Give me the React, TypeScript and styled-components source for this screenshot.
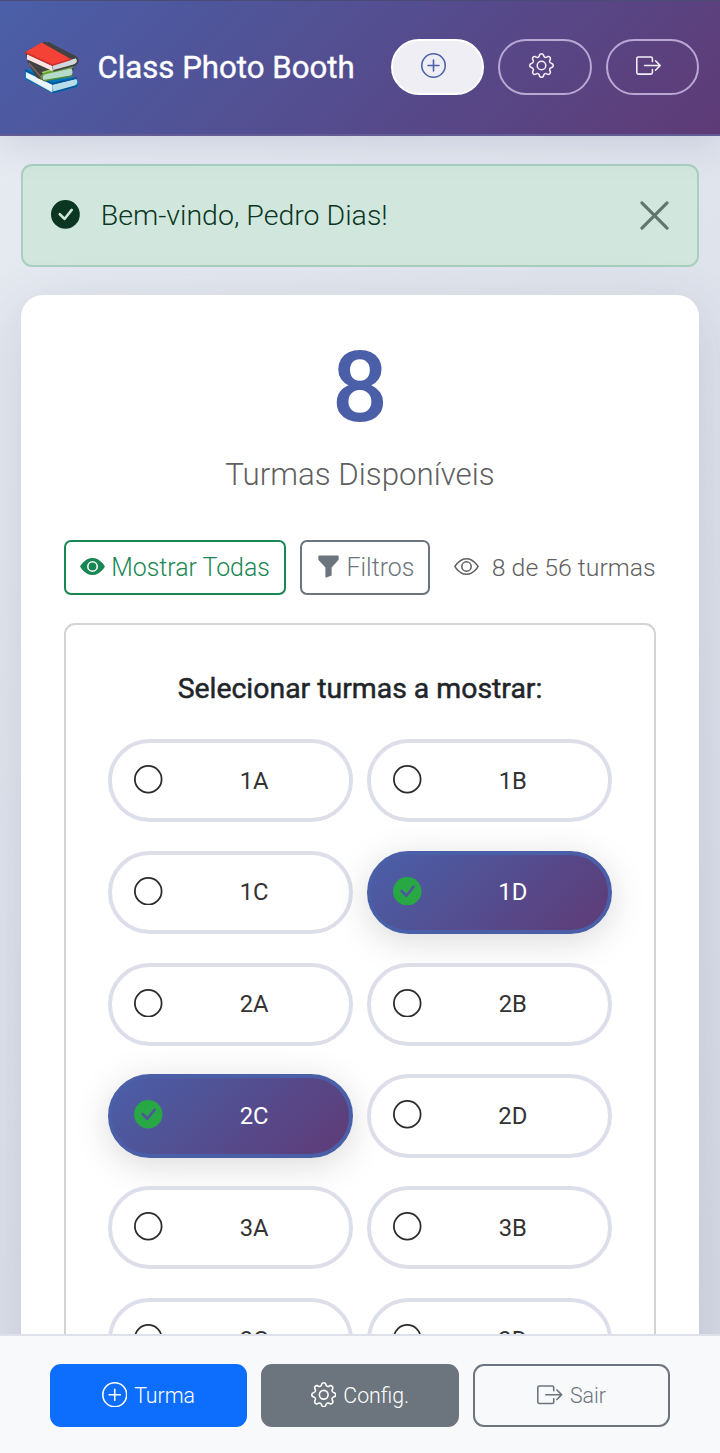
import React, { useState } from "react";
import styled, { createGlobalStyle, css } from "styled-components";
import {
  BsBoxArrowRight,
  BsCheckCircleFill,
  BsCircle,
  BsEye,
  BsEyeFill,
  BsFunnelFill,
  BsGear,
  BsPlusCircle,
} from "react-icons/bs";

const brandGradient = "linear-gradient(135deg, #4a5fa8 0%, #5e3b76 100%)";

const GlobalStyle = createGlobalStyle`
  *, *::before, *::after { box-sizing: border-box; }
  body {
    margin: 0;
    font-family: Roboto, "Liberation Sans", sans-serif;
    font-weight: 300;
    color: #212529;
  }
  button { font: inherit; cursor: pointer; margin: 0; }
  svg { display: block; flex: none; }
`;

const Screen = styled.div`
  display: flex;
  flex-direction: column;
  height: 1453px;
  overflow: hidden;
  background: linear-gradient(135deg, #e8ebf2 0%, #d4d9e4 100%);
`;

const Header = styled.header`
  position: relative;
  z-index: 1;
  flex: none;
  display: flex;
  align-items: center;
  height: 136px;
  padding: 0 21px 2px 23px;
  background: ${brandGradient};
  border-top: 1px solid #4b4b78;
  border-bottom: 2px solid #625b94;
  box-shadow: 0 7px 36px rgba(50, 70, 120, 0.15);

  > svg {
    margin-top: 2px;
  }
`;

const Title = styled.h1`
  margin: 0 auto 0 17.4px;
  padding-top: 2px;
  font-size: 31.2px;
  line-height: 40px;
  font-weight: 400;
  -webkit-text-stroke: 0.4px currentColor;
  color: #fff;
  white-space: nowrap;
`;

const HeaderActions = styled.div`
  display: flex;
  gap: 14px;
`;

const PillButton = styled.button<{ $solid?: boolean }>`
  display: flex;
  align-items: center;
  justify-content: center;
  width: 93.4px;
  height: 56px;
  padding: 0 7.4px 1.4px 0;
  border-radius: 28px;
  border: 2.5px solid ${(p) => (p.$solid ? "#fff" : "#b9a7d4")};
  background: ${(p) => (p.$solid ? "#eeeef4" : "transparent")};
  color: ${(p) => (p.$solid ? "#4a5fa8" : "#f3edf8")};
`;

const Content = styled.main`
  flex: 1;
  min-height: 0;
  overflow: hidden;
  padding: 28.4px 21.4px 0;
`;

const Alert = styled.div`
  display: flex;
  align-items: center;
  height: 102.4px;
  padding: 0 27.8px 0 28px;
  border: 2px solid #a9cfc0;
  border-radius: 11px;
  background: #d1e7dd;
  color: #0a3622;
  font-size: 28.5px;
  line-height: 40px;

  > svg {
    margin-bottom: 2px;
  }
`;

const AlertText = styled.span`
  margin: 0 auto 0 20.5px;
`;

const CloseButton = styled.button`
  padding: 0;
  border: 0;
  background: none;
  color: #62746b;
`;

const Card = styled.section`
  height: 1400px;
  margin-top: 28.6px;
  padding: 42px 43px;
  border-radius: 22px;
  background: #fff;
  box-shadow: 0 14px 58px rgba(50, 60, 90, 0.14);
`;

const Count = styled.div`
  font-size: 99px;
  line-height: 100px;
  font-weight: 500;
  text-align: center;
  color: #4a5fa8;
`;

const CountLabel = styled.p`
  margin: 16px 0 0;
  font-size: 31.3px;
  line-height: 44px;
  text-align: center;
  color: #5f5f5f;
`;

const Toolbar = styled.div`
  display: flex;
  align-items: center;
  margin-top: 43px;
  font-size: 24.9px;
`;

const OutlineButton = styled.button<{ $color: string }>`
  display: flex;
  align-items: center;
  justify-content: center;
  gap: 6px;
  height: 54.6px;
  padding: 0 13.8px;
  margin-right: 14px;
  border: 2px solid ${(p) => p.$color};
  border-radius: 7px;
  background: #fff;
  color: ${(p) => p.$color};
  white-space: nowrap;

  svg {
    margin-bottom: 2px;
  }
`;

const Summary = styled.span`
  display: flex;
  align-items: center;
  gap: 13px;
  margin-left: auto;
  color: #5f5f5f;
  font-size: 24.8px;
  white-space: nowrap;

  svg {
    margin-bottom: 2px;
  }
`;

const Picker = styled.div`
  height: 1000px;
  margin-top: 28px;
  padding: 43.6px 42px;
  border: 2px solid #d4d4d6;
  border-radius: 11px;
`;

const PickerTitle = styled.h2`
  margin: 0;
  font-size: 28.4px;
  line-height: 40px;
  font-weight: 400;
  -webkit-text-stroke: 0.5px currentColor;
  text-align: center;
`;

const ClassGrid = styled.div`
  display: grid;
  grid-template-columns: 1fr 1fr;
  gap: 28.4px 14px;
  margin-top: 30.4px;
`;

const ClassOption = styled.button<{ $selected: boolean }>`
  display: grid;
  grid-template-columns: 28px 1fr;
  align-items: center;
  height: 83.4px;
  padding: 0 3px 0 22px;
  border: 4px solid #dcdfea;
  border-radius: 42px;
  background: #fff;
  color: #333;
  font-size: 23.8px;
  font-weight: 400;
  ${(p) =>
    p.$selected &&
    css`
      border-color: #4a5fa8;
      background: ${brandGradient};
      color: #fff;
      box-shadow: 0 7px 36px rgba(0, 0, 0, 0.15);
    `}
`;

const OptionMark = styled.span<{ $selected: boolean }>`
  padding-bottom: 2.6px;
  color: ${(p) => (p.$selected ? "#28a745" : "#2b2b2b")};
`;

const BottomBar = styled.nav`
  flex: none;
  display: grid;
  grid-template-columns: repeat(3, 1fr);
  gap: 14.4px;
  height: 119.5px;
  padding: 28.5px 49.7px 0;
  border-top: 2px solid #dfe1ea;
  background: #f8f9fb;
`;

const BarButton = styled.button<{ $bg: string; $fg: string; $line: string }>`
  display: flex;
  align-items: center;
  justify-content: center;
  gap: 7px;
  height: 63px;
  padding: 0;
  border: 2px solid ${(p) => p.$line};
  border-radius: 11px;
  background: ${(p) => p.$bg};
  color: ${(p) => p.$fg};
  font-size: 21.3px;

  svg {
    margin-bottom: 2px;
  }
`;

function BooksLogo() {
  return (
    <svg width="57" height="56" viewBox="1 0 58 56" aria-hidden="true">
      <path d="M3 30 L28 27 L56 40 Q59 43 56 47 L32 54 L3 39Z" fill="#0277bd" />
      <path d="M4 32 L31 45 V53 L4 38Z" fill="#e8f3fa" />
      <path d="M31 45 L55 39 Q58 43 54 46 L32 53Z" fill="#b8dce9" />
      <path d="M3 30 L31 44 L56 38" fill="none" stroke="#01579b" strokeWidth="1.8" />
      <path d="M31 53 L56 46" stroke="#01579b" strokeWidth="1.5" />
      <path d="M5 21 L27 14 L52 26 Q53 32 50 36 L22 41 L15 38Z" fill="#424242" />
      <path d="M20 32 L47 24 L52 27 L23 36Z" fill="#9ccc65" />
      <path d="M22 35 L50 28 Q53 32 50 36 L23 41 Q19 38 22 35Z" fill="#b5dccb" />
      <path d="M20 40 Q19 34 25 33 L52 27" fill="none" stroke="#689f38" strokeWidth="1.7" />
      <path d="M22 41 L51 36" stroke="#558b2f" strokeWidth="1.5" />
      <path d="M7 23 L20 38" stroke="#8d6e63" strokeWidth="1.4" />
      <path d="M3 12 L23 1 L54 16 Q59 20 55 24 L33 30 L5 18Z" fill="#424242" />
      <path d="M3 12 L20 2 L50 19 L31 25Z" fill="#f44336" />
      <path d="M5 14 L31 26 V31 L5 19Z" fill="#fce4e4" />
      <path d="M31 25 L55 18 Q58 22 54 24 L32 31Z" fill="#cfd8dc" />
      <path d="M3 12 L31 25 L50 19" fill="none" stroke="#d32f2f" strokeWidth="1.6" />
      <path d="M32 31 L54 25 Q59 21 55 17 L26 2" fill="none" stroke="#424242" strokeWidth="1.8" />
    </svg>
  );
}

const classNames = ["1A", "1B", "1C", "1D", "2A", "2B", "2C", "2D", "3A", "3B", "3C", "3D"];

export default function App() {
  const [selected, setSelected] = useState<string[]>(["1D", "2C"]);
  const [welcome, setWelcome] = useState(true);

  const toggle = (name: string) =>
    setSelected((prev) =>
      prev.includes(name) ? prev.filter((n) => n !== name) : [...prev, name]
    );

  return (
    <>
      <GlobalStyle />
      <Screen>
        <Header>
          <BooksLogo />
          <Title>Class Photo Booth</Title>
          <HeaderActions>
            <PillButton $solid aria-label="Turma">
              <BsPlusCircle size={25} />
            </PillButton>
            <PillButton aria-label="Config.">
              <BsGear size={25} />
            </PillButton>
            <PillButton aria-label="Sair">
              <BsBoxArrowRight size={25} />
            </PillButton>
          </HeaderActions>
        </Header>

        <Content>
          {welcome && (
            <Alert role="alert">
              <BsCheckCircleFill size={28.8} />
              <AlertText>Bem-vindo, Pedro Dias!</AlertText>
              <CloseButton aria-label="Fechar" onClick={() => setWelcome(false)}>
                <svg width="29" height="29" viewBox="0 0 30 30">
                  <path
                    d="M2 2 L28 28 M28 2 L2 28"
                    stroke="currentColor"
                    strokeWidth="3.2"
                    strokeLinecap="round"
                  />
                </svg>
              </CloseButton>
            </Alert>
          )}

          <Card>
            <Count>8</Count>
            <CountLabel>Turmas Disponíveis</CountLabel>
            <Toolbar>
              <OutlineButton $color="#198754">
                <BsEyeFill size={25} />
                Mostrar Todas
              </OutlineButton>
              <OutlineButton $color="#6c757d">
                <BsFunnelFill size={25} />
                Filtros
              </OutlineButton>
              <Summary>
                <BsEye size={25} />8 de 56 turmas
              </Summary>
            </Toolbar>

            <Picker>
              <PickerTitle>Selecionar turmas a mostrar:</PickerTitle>
              <ClassGrid>
                {classNames.map((name) => {
                  const on = selected.includes(name);
                  return (
                    <ClassOption key={name} $selected={on} onClick={() => toggle(name)}>
                      <OptionMark $selected={on}>
                        {on ? <BsCheckCircleFill size={28.5} /> : <BsCircle size={28.5} />}
                      </OptionMark>
                      <span>{name}</span>
                    </ClassOption>
                  );
                })}
              </ClassGrid>
            </Picker>
          </Card>
        </Content>

        <BottomBar>
          <BarButton $bg="#0d6efd" $fg="#fff" $line="#0d6efd">
            <BsPlusCircle size={25.5} />
            Turma
          </BarButton>
          <BarButton $bg="#6c757d" $fg="#fff" $line="#6c757d">
            <BsGear size={25.5} />
            Config.
          </BarButton>
          <BarButton $bg="transparent" $fg="#6c757d" $line="#6c757d">
            <BsBoxArrowRight size={25.5} />
            Sair
          </BarButton>
        </BottomBar>
      </Screen>
    </>
  );
}
